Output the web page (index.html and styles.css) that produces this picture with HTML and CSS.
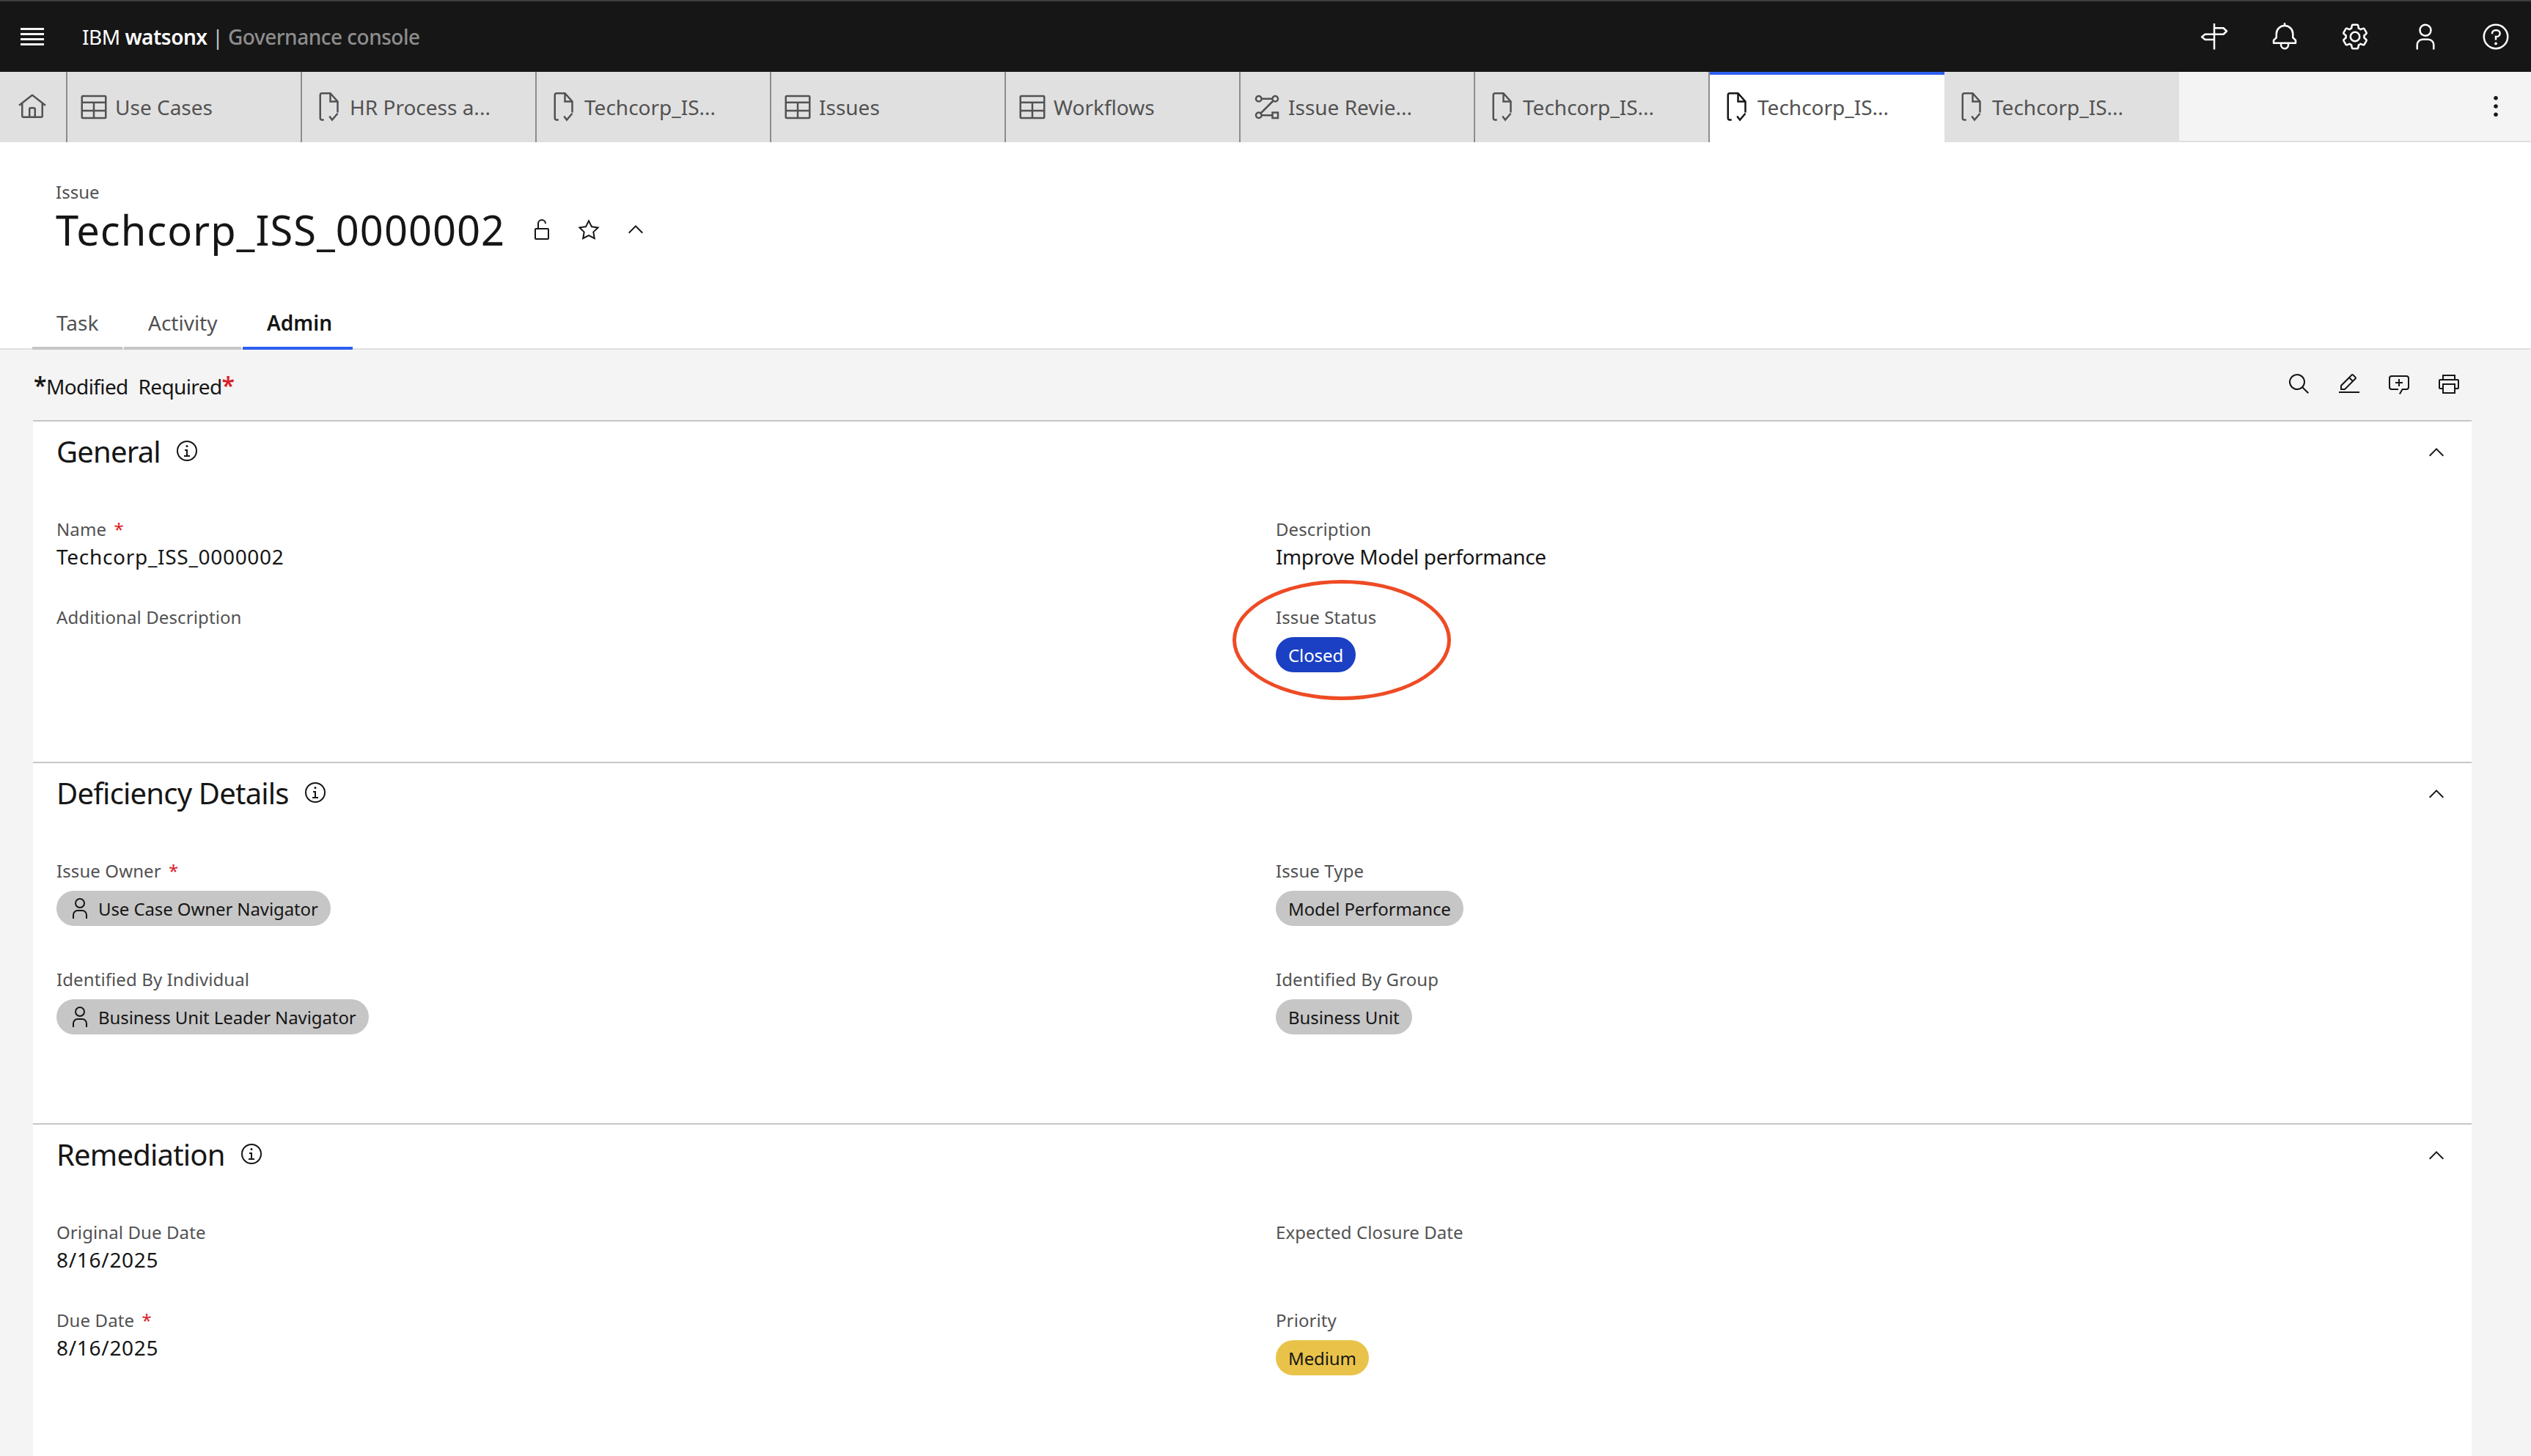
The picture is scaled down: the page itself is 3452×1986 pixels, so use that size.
FILE: index.html

```html
<!DOCTYPE html>
<html lang="en">
  <head>
    <meta charset="UTF-8" />
    <meta name="viewport" content="width=device-width, initial-scale=1.0" />
    <title>Techcorp_ISS_0000002</title>
    <link rel="stylesheet" href="styles.css">
  </head>
  <body>
    <svg class="sprite" xmlns="http://www.w3.org/2000/svg">
      <symbol id="i-post" viewBox="0 0 32 32"><path fill="none" stroke="currentColor" stroke-width="2" stroke-linejoin="round" d="M16 1.6V30M16 6.6h10l3.6 3.4-3.6 3.4H6L2.4 16.3 6 19.2h10"/></symbol>
      <symbol id="i-bell" viewBox="0 0 32 32"><path d="M28.7071,19.293,26,16.5859V13a10.0136,10.0136,0,0,0-9-9.9492V1H15V3.0508A10.0136,10.0136,0,0,0,6,13v3.5859L3.2929,19.293A1,1,0,0,0,3,20v3a1,1,0,0,0,1,1h7v.7768a5.152,5.152,0,0,0,4.5,5.1987A5.0057,5.0057,0,0,0,21,25V24h7a1,1,0,0,0,1-1V20A1,1,0,0,0,28.7071,19.293ZM19,25a3,3,0,0,1-6,0V24h6Zm8-3H5V20.4141L7.707,17.707A1,1,0,0,0,8,17V13a8,8,0,0,1,16,0v4a1,1,0,0,0,.293.707L27,20.4141Z"/></symbol>
      <symbol id="i-gear" viewBox="0 0 32 32"><path d="M27,16.76c0-.25,0-.5,0-.76s0-.51,0-.77l1.92-1.68A2,2,0,0,0,29.3,11L26.94,7a2,2,0,0,0-1.73-1,2,2,0,0,0-.64.1l-2.43.82a11.35,11.35,0,0,0-1.31-.75l-.51-2.52a2,2,0,0,0-2-1.61H13.64a2,2,0,0,0-2,1.61l-.51,2.52a11.48,11.48,0,0,0-1.32.75L7.43,6.06A2,2,0,0,0,6.79,6,2,2,0,0,0,5.06,7L2.7,11a2,2,0,0,0,.41,2.51L5,15.24c0,.25,0,.5,0,.76s0,.51,0,.77L3.11,18.45A2,2,0,0,0,2.7,21L5.06,25a2,2,0,0,0,1.73,1,2,2,0,0,0,.64-.1l2.43-.82a11.35,11.35,0,0,0,1.31.75l.51,2.52a2,2,0,0,0,2,1.61h4.72a2,2,0,0,0,2-1.61l.51-2.52a11.48,11.48,0,0,0,1.32-.75l2.43.82a2,2,0,0,0,.64.1,2,2,0,0,0,1.73-1L29.3,21a2,2,0,0,0-.41-2.51ZM25.21,24l-3.43-1.16a8.86,8.86,0,0,1-2.71,1.57L18.36,28H13.64l-.71-3.55a9.36,9.36,0,0,1-2.7-1.57L6.79,24,4.43,20l2.72-2.4a8.9,8.9,0,0,1,0-3.13L4.43,12,6.79,8l3.43,1.16a8.86,8.86,0,0,1,2.71-1.57L13.64,4h4.72l.71,3.55a9.36,9.36,0,0,1,2.7,1.57L25.21,8,27.57,12l-2.72,2.4a8.9,8.9,0,0,1,0,3.13L27.57,20Z"/><path d="M16,22a6,6,0,1,1,6-6A5.94,5.94,0,0,1,16,22Zm0-10a3.91,3.91,0,0,0-4,4,3.91,3.91,0,0,0,4,4,3.91,3.91,0,0,0,4-4A3.91,3.91,0,0,0,16,12Z"/></symbol>
      <symbol id="i-user" viewBox="0 0 32 32"><path d="M16,4a5,5,0,1,1-5,5,5,5,0,0,1,5-5m0-2a7,7,0,1,0,7,7A7,7,0,0,0,16,2Z"/><path d="M26,30H24V25a5,5,0,0,0-5-5H13a5,5,0,0,0-5,5v5H6V25a7,7,0,0,1,7-7h6a7,7,0,0,1,7,7Z"/></symbol>
      <symbol id="i-help" viewBox="0 0 32 32"><path d="M16,2A14,14,0,1,0,30,16,14,14,0,0,0,16,2Zm0,26A12,12,0,1,1,28,16,12,12,0,0,1,16,28Z"/><circle cx="16" cy="23.5" r="1.5"/><path d="M17,8H15.5A4.49,4.49,0,0,0,11,12.5V13h2v-.5A2.5,2.5,0,0,1,15.5,10H17a2.5,2.5,0,0,1,0,5H15v4.5h2V17a4.5,4.5,0,0,0,0-9Z"/></symbol>
      <symbol id="i-home" viewBox="0 0 32 32"><path d="M16.6123,2.2138a1.01,1.01,0,0,0-1.2427,0L1,13.4194l1.2427,1.5717L4,13.6209V26a2.0041,2.0041,0,0,0,2,2H26a2.0037,2.0037,0,0,0,2-2V13.63L29.7573,15,31,13.4282ZM18,26H14V18h4Zm2,0V18a2.0023,2.0023,0,0,0-2-2H14a2.002,2.002,0,0,0-2,2v8H6V12.0615l10-7.79,10,7.8005V26Z"/></symbol>
      <symbol id="i-table" viewBox="0 0 32 32"><path fill="none" stroke="currentColor" stroke-width="2" d="M4 4h24a1 1 0 0 1 1 1v22a1 1 0 0 1-1 1H4a1 1 0 0 1-1-1V5a1 1 0 0 1 1-1zM3 11h26M3 20h26M16 11v17"/></symbol>
      <symbol id="i-file" viewBox="0 0 32 32"><path fill="none" stroke="currentColor" stroke-width="2" d="M11 30H9a2 2 0 0 1-2-2V3a2 2 0 0 1 2-2h9l8 9v12M18 1v9h8M17 26l3 4 6-7"/></symbol>
      <symbol id="i-flow" viewBox="0 0 32 32"><g fill="none" stroke="currentColor" stroke-width="2"><circle cx="7" cy="7" r="3"/><circle cx="25" cy="7" r="3"/><circle cx="7" cy="25" r="3"/><rect x="22" y="22" width="6" height="6"/><path d="M10 7h12M23 9 9 23M10 25h12"/></g></symbol>
      <symbol id="i-search" viewBox="0 0 32 32"><path d="M29,27.5859l-7.5521-7.5521a11.0177,11.0177,0,1,0-1.4141,1.4141L27.5859,29ZM4,13a9,9,0,1,1,9,9A9.01,9.01,0,0,1,4,13Z"/></symbol>
      <symbol id="i-edit" viewBox="0 0 32 32"><path d="M2 26H30V28H2z"/><path d="M25.4,9c0.8-0.8,0.8-2,0-2.8c0,0,0,0,0,0l-3.6-3.6c-0.8-0.8-2-0.8-2.8,0c0,0,0,0,0,0l-15,15V24h6.4L25.4,9z M20.4,4L24,7.6 l-3,3L17.4,7L20.4,4z M6,22v-3.6l10-10l3.6,3.6l-10,10H6z"/></symbol>
      <symbol id="i-comment" viewBox="0 0 32 32"><path d="M17.7358,30,16,29l4-7h6a1.9966,1.9966,0,0,0,2-2V8a1.9966,1.9966,0,0,0-2-2H6A1.9966,1.9966,0,0,0,4,8V20a1.9966,1.9966,0,0,0,2,2h9v2H6a3.9993,3.9993,0,0,1-4-4V8A3.9988,3.9988,0,0,1,6,4H26a3.9988,3.9988,0,0,1,4,4V20a3.9993,3.9993,0,0,1-4,4H21.1646Z"/><path d="M17 9 15 9 15 13 11 13 11 15 15 15 15 19 17 19 17 15 21 15 21 13 17 13 17 9z"/></symbol>
      <symbol id="i-print" viewBox="0 0 32 32"><path d="M28,9H25V3H7V9H4a2,2,0,0,0-2,2V21a2,2,0,0,0,2,2H7v6H25V23h3a2,2,0,0,0,2-2V11A2,2,0,0,0,28,9ZM9,5H23V9H9ZM23,27H9V17H23Zm5-6H25V15H7v6H4V11H28Z"/></symbol>
      <symbol id="i-lock" viewBox="0 0 32 32"><path d="M24,14H12V8a4,4,0,0,1,8,0h2A6,6,0,0,0,10,8v6H8a2,2,0,0,0-2,2V28a2,2,0,0,0,2,2H24a2,2,0,0,0,2-2V16A2,2,0,0,0,24,14Zm0,14H8V16H24Z"/></symbol>
      <symbol id="i-star" viewBox="0 0 32 32"><path d="M16,6.52l2.76,5.58.46,1,1,.15,6.16.89L22,18.44l-.75.73.18,1,1.05,6.13-5.51-2.89L16,23l-.93.49L9.56,26.34l1-6.13.18-1L10,18.44,5.58,14.09l6.16-.89,1-.15.46-1L16,6.52M16,2l-4.55,9.22L1.28,12.69l7.36,7.18L6.9,30,16,25.22,25.1,30,23.36,19.87l7.36-7.17L20.55,11.22Z"/></symbol>
      <symbol id="i-up" viewBox="0 0 32 32"><path d="M16 10 26 20 24.6 21.4 16 12.8 7.4 21.4 6 20z"/></symbol>
      <symbol id="i-info" viewBox="0 0 32 32"><path d="M17 22 17 14 13 14 13 16 15 16 15 22 12 22 12 24 20 24 20 22 17 22z"/><path d="M16,8a1.5,1.5,0,1,0,1.5,1.5A1.5,1.5,0,0,0,16,8Z"/><path d="M16,30A14,14,0,1,1,30,16,14,14,0,0,1,16,30ZM16,4A12,12,0,1,0,28,16,12,12,0,0,0,16,4Z"/></symbol>
      <symbol id="i-kebab" viewBox="0 0 32 32"><circle cx="16" cy="7" r="2.2"/><circle cx="16" cy="16" r="2.2"/><circle cx="16" cy="25" r="2.2"/></symbol>
    </svg>

    <header class="topbar">
      <div class="menu-btn"><span></span><span></span><span></span><span></span></div>
      <div class="brand">IBM <b>watsonx</b> <span class="brand-sub"><i>|</i> Governance console</span></div>
      <div class="top-icons">
        <svg class="icon40"><use href="#i-post" /></svg>
        <svg class="icon40"><use href="#i-bell" /></svg>
        <svg class="icon40"><use href="#i-gear" /></svg>
        <svg class="icon40"><use href="#i-user" /></svg>
        <svg class="icon40"><use href="#i-help" /></svg>
      </div>
    </header>

    <nav class="tabbar">
      <div class="tab tab-home"><svg class="icon40"><use href="#i-home" /></svg></div>
      <div class="tab"><svg class="icon40"><use href="#i-table" /></svg>Use Cases</div>
      <div class="tab"><svg class="icon40"><use href="#i-file" /></svg>HR Process a...</div>
      <div class="tab"><svg class="icon40"><use href="#i-file" /></svg>Techcorp_IS...</div>
      <div class="tab"><svg class="icon40"><use href="#i-table" /></svg>Issues</div>
      <div class="tab"><svg class="icon40"><use href="#i-table" /></svg>Workflows</div>
      <div class="tab"><svg class="icon40"><use href="#i-flow" /></svg>Issue Revie...</div>
      <div class="tab"><svg class="icon40"><use href="#i-file" /></svg>Techcorp_IS...</div>
      <div class="tab active"><svg class="icon40"><use href="#i-file" /></svg>Techcorp_IS...</div>
      <div class="tab last"><svg class="icon40"><use href="#i-file" /></svg>Techcorp_IS...</div>
      <div class="tab-rest"><svg class="icon40"><use href="#i-kebab" /></svg></div>
    </nav>

    <section class="pagehead">
      <div class="crumb">Issue</div>
      <div class="title-row">
        <h1>Techcorp_ISS_0000002</h1>
        <div class="title-icons">
          <svg class="icon32"><use href="#i-lock" /></svg>
          <svg class="icon32"><use href="#i-star" /></svg>
          <svg class="icon32"><use href="#i-up" /></svg>
        </div>
      </div>
      <div class="subtabs">
        <div class="subtab w-task">Task</div>
        <div class="subtab w-activity">Activity</div>
        <div class="subtab w-admin selected">Admin</div>
      </div>
    </section>

    <main class="content">
      <div class="toolbar">
        <div class="legend"><span class="star">*</span>Modified <span class="req-text">Required</span><span class="star red">*</span></div>
        <div class="tool-icons">
          <svg class="icon32"><use href="#i-search" /></svg>
          <svg class="icon32"><use href="#i-edit" /></svg>
          <svg class="icon32"><use href="#i-comment" /></svg>
          <svg class="icon32"><use href="#i-print" /></svg>
        </div>
      </div>

      <div class="card">
        <section class="block block-general">
          <div class="block-head">
            <h2>General</h2>
            <svg class="icon32 info"><use href="#i-info" /></svg>
            <svg class="icon32 collapse"><use href="#i-up" /></svg>
          </div>
          <div class="fields">
            <div class="field">
              <div class="label">Name <span class="red">*</span></div>
              <div class="value num">Techcorp_ISS_0000002</div>
            </div>
            <div class="field">
              <div class="label">Description</div>
              <div class="value">Improve Model performance</div>
            </div>
            <div class="field">
              <div class="label">Additional Description</div>
            </div>
            <div class="field">
              <div class="label">Issue Status</div>
              <span class="pill pill-blue">Closed</span>
              <div class="callout"></div>
            </div>
          </div>
        </section>

        <section class="block block-deficiency">
          <div class="block-head">
            <h2>Deficiency Details</h2>
            <svg class="icon32 info"><use href="#i-info" /></svg>
            <svg class="icon32 collapse"><use href="#i-up" /></svg>
          </div>
          <div class="fields tall">
            <div class="field">
              <div class="label">Issue Owner <span class="red">*</span></div>
              <span class="pill pill-user"><svg class="icon32"><use href="#i-user" /></svg>Use Case Owner Navigator</span>
            </div>
            <div class="field">
              <div class="label">Issue Type</div>
              <span class="pill">Model Performance</span>
            </div>
            <div class="field">
              <div class="label">Identified By Individual</div>
              <span class="pill pill-user"><svg class="icon32"><use href="#i-user" /></svg>Business Unit Leader Navigator</span>
            </div>
            <div class="field">
              <div class="label">Identified By Group</div>
              <span class="pill">Business Unit</span>
            </div>
          </div>
        </section>

        <section class="block">
          <div class="block-head">
            <h2>Remediation</h2>
            <svg class="icon32 info"><use href="#i-info" /></svg>
            <svg class="icon32 collapse"><use href="#i-up" /></svg>
          </div>
          <div class="fields">
            <div class="field">
              <div class="label">Original Due Date</div>
              <div class="value num">8/16/2025</div>
            </div>
            <div class="field">
              <div class="label">Expected Closure Date</div>
            </div>
            <div class="field">
              <div class="label">Due Date <span class="red">*</span></div>
              <div class="value num">8/16/2025</div>
            </div>
            <div class="field">
              <div class="label">Priority</div>
              <span class="pill pill-yellow">Medium</span>
            </div>
          </div>
        </section>
      </div>
    </main>
  </body>
</html>
```

FILE: styles.css

```css
* {
  box-sizing: border-box;
}
html,
body {
  margin: 0;
  padding: 0;
}
body {
  width: 3452px;
  height: 1986px;
  overflow: hidden;
  display: flex;
  flex-direction: column;
  font-family: "Noto Sans", Roboto, Arial, sans-serif;
  color: #161616;
  background-color: #fff;
}
.sprite {
  display: none;
}
.icon40,
.icon32 {
  flex: none;
  display: block;
  fill: currentColor;
}
.icon40 {
  width: 40px;
  height: 40px;
}
.icon32 {
  width: 32px;
  height: 32px;
}

/* top bar */
.topbar {
  flex: none;
  height: 98px;
  display: flex;
  align-items: center;
  padding-left: 28px;
  background-color: #161616;
  border-top: 2px solid #3d3d3d;
  color: #fff;
}
.menu-btn {
  width: 32px;
  height: 24px;
  display: flex;
  flex-direction: column;
  justify-content: space-between;
}
.menu-btn span {
  display: block;
  height: 3px;
  background-color: #f4f4f4;
}
.brand {
  margin-left: 52px;
  font-size: 28px;
  letter-spacing: -0.5px;
  white-space: pre;
}
.brand b {
  font-weight: 600;
}
.brand-sub {
  color: #8d8d8d;
  font-weight: 500;
}
.brand-sub i {
  font-style: normal;
  font-weight: 400;
  color: #c6c6c6;
}
.top-icons {
  margin-left: auto;
  margin-right: 28px;
  display: flex;
  gap: 56px;
}

/* open tabs */
.tabbar {
  flex: none;
  height: 96px;
  display: flex;
  background-color: #f4f4f4;
}
.tab {
  flex: none;
  width: 320px;
  display: flex;
  align-items: center;
  gap: 9px;
  padding-left: 16px;
  background-color: #e0e0e0;
  border-right: 2px solid #8d8d8d;
  font-size: 28px;
  color: #525252;
  white-space: nowrap;
}
.tab-home {
  width: 92px;
  padding-left: 24px;
}
.tab svg {
  color: #525252;
}
.tab.active {
  background-color: #fff;
  border-right: none;
  border-top: 4px solid #2d5ff0;
  padding-bottom: 4px;
}
.tab.active svg {
  color: #161616;
}
.tab.last {
  border-right: none;
}
.tab-rest {
  flex: 1;
  display: flex;
  justify-content: flex-end;
  align-items: center;
  padding-right: 28px;
  border-bottom: 2px solid #e0e0e0;
}

/* page heading */
.pagehead {
  flex: none;
  height: 283px;
  padding-top: 52px;
  border-bottom: 2px solid #e0e0e0;
}
.crumb {
  padding-left: 76px;
  font-size: 24px;
  line-height: 32px;
  color: #525252;
}
.title-row {
  display: flex;
  align-items: center;
  margin-top: -2px;
  padding-left: 76px;
  height: 74px;
}
h1 {
  margin: 0;
  font-size: 56px;
  line-height: 72px;
  font-weight: 400;
  letter-spacing: 1px;
}
.title-icons {
  display: flex;
  gap: 32px;
  margin-left: 34px;
}
.subtabs {
  display: flex;
  gap: 2px;
  margin-top: 54px;
  padding-left: 44px;
}
.subtab {
  height: 73px;
  padding: 3px 0 0 33px;
  display: flex;
  align-items: center;
  border-bottom: 4px solid #c6c6c6;
  font-size: 28px;
  color: #525252;
}
.w-task {
  width: 123px;
}
.w-activity {
  width: 160px;
}
.w-admin {
  width: 150px;
}
.subtab.selected {
  font-weight: 600;
  color: #161616;
  border-bottom-color: #2d5ff0;
}

/* form area */
.content {
  flex: 1;
  display: flex;
  flex-direction: column;
  background-color: #f4f4f4;
  min-height: 0;
}
.toolbar {
  flex: none;
  height: 96px;
  display: flex;
  justify-content: space-between;
  align-items: center;
  padding: 0 96px 0 46px;
}
.legend {
  padding-top: 4px;
  font-size: 28px;
  letter-spacing: -0.6px;
  white-space: pre;
}
.star {
  font-size: 32px;
  line-height: 1;
  font-weight: 600;
}
.red {
  color: #da1e28;
}
.req-text {
  margin-left: 7px;
}
.tool-icons {
  display: flex;
  gap: 36px;
  margin-top: -2px;
}
.card {
  flex: 1;
  margin: 0 81px 0 45px;
  background-color: #fff;
}
.block {
  border-top: 2px solid #c6c6c6;
  padding-left: 32px;
}
.block-general {
  height: 466px;
}
.block-deficiency {
  height: 493px;
}
.block-head {
  height: 131px;
  padding-top: 14px;
  display: flex;
  align-items: flex-start;
}
h2 {
  margin: 0;
  font-size: 40px;
  line-height: 54px;
  font-weight: 400;
  letter-spacing: -0.8px;
}
.info {
  margin: 10px 0 0 20px;
}
.collapse {
  margin: 12px 32px 0 auto;
}
.fields {
  display: grid;
  grid-template-columns: 1663px 1fr;
  grid-auto-rows: 120px;
}
.fields.tall {
  grid-auto-rows: 148px;
}
.field {
  position: relative;
}
.label {
  font-size: 24px;
  line-height: 32px;
  color: #525252;
  letter-spacing: 0.1px;
}
.label .red {
  margin-left: 4px;
}
.value {
  margin-top: 1px;
  font-size: 28px;
  line-height: 40px;
  letter-spacing: -0.4px;
}
.value.num {
  letter-spacing: 0.7px;
}
.pill {
  display: inline-flex;
  align-items: center;
  height: 48px;
  margin-top: 11px;
  padding: 0 17px;
  border-radius: 24px;
  background-color: #c6c6c6;
  font-size: 24px;
  letter-spacing: -0.1px;
  white-space: nowrap;
}
.pill-user {
  gap: 9px;
  padding-left: 16px;
}
.pill-blue {
  background-color: #1b40c4;
  color: #fff;
}
.pill-yellow {
  background-color: #e9c349;
}

/* red ring drawn on top of the status field */
.callout {
  position: absolute;
  left: -59px;
  top: -35px;
  width: 298px;
  height: 164px;
  border: 5px solid #ee4b25;
  border-radius: 50%;
}
```
